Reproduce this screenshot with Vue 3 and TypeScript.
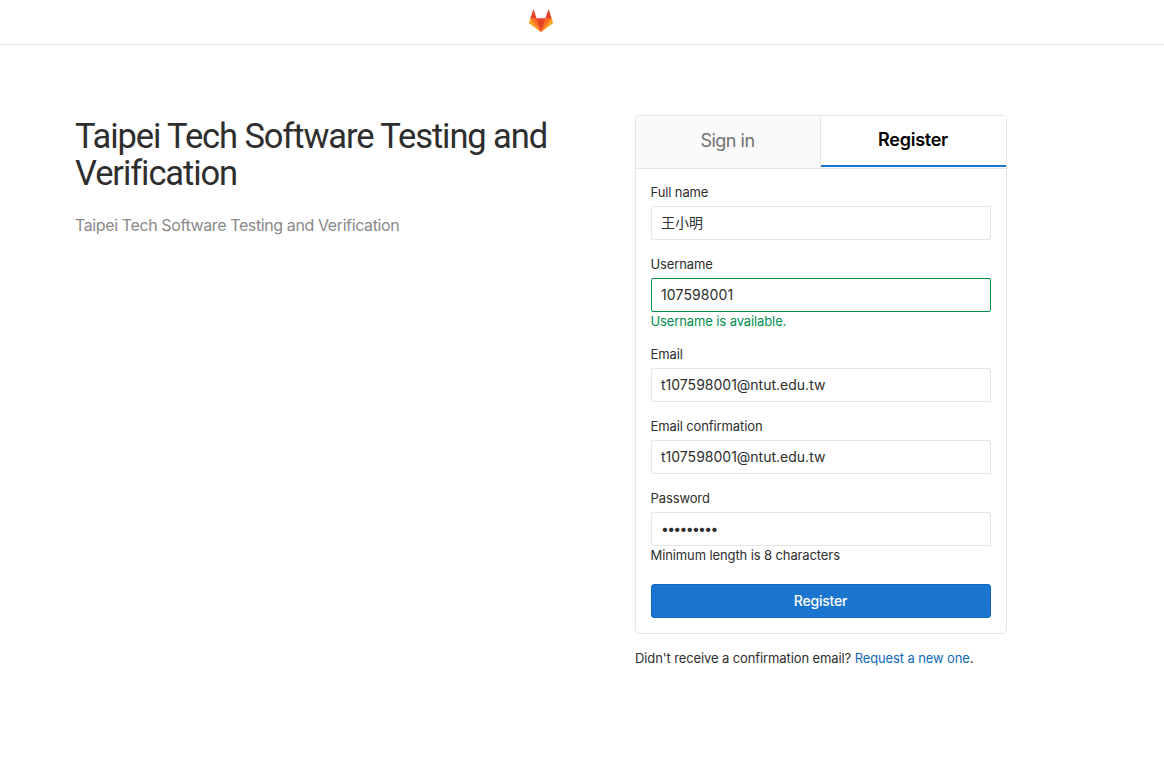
<script setup lang="ts">
import { ref } from 'vue'

interface Field {
  id: string
  label: string
  type: string
  value: string
  hint?: string
  valid?: boolean
}

const fields = ref<Field[]>([
  { id: 'name', label: 'Full name', type: 'text', value: '王小明' },
  { id: 'username', label: 'Username', type: 'text', value: '107598001', hint: 'Username is available.', valid: true },
  { id: 'email', label: 'Email', type: 'text', value: 't107598001@ntut.edu.tw' },
  { id: 'email-confirmation', label: 'Email confirmation', type: 'text', value: 't107598001@ntut.edu.tw' },
  { id: 'password', label: 'Password', type: 'password', value: '107598001', hint: 'Minimum length is 8 characters' },
])
</script>

<template>
  <div class="page">
    <header class="navbar">
      <svg class="logo" width="24" height="24" viewBox="0 0 36 36" aria-label="GitLab">
        <path fill="#e24329" d="M2 14l9.38 9v-9l-4-12.28c-.205-.632-1.176-.632-1.38 0z" />
        <path fill="#e24329" d="M34 14l-9.38 9v-9l4-12.28c.205-.632 1.176-.632 1.38 0z" />
        <path fill="#e24329" d="M18 34.38L3 14h30z" />
        <path fill="#fc6d26" d="M18 34.38L11.38 14H2l4 11z" />
        <path fill="#fc6d26" d="M18 34.38L24.62 14H34l-4 11z" />
        <path fill="#fca326" d="M2 14L.1 20.16c-.18.565 0 1.2.5 1.56L18 34.38z" />
        <path fill="#fca326" d="M34 14l1.9 6.16c.18.565 0 1.2-.5 1.56L18 34.38z" />
      </svg>
    </header>
    <main class="content">
      <section class="brand">
        <h1>Taipei Tech Software Testing and Verification</h1>
        <p>Taipei Tech Software Testing and Verification</p>
      </section>
      <section class="account">
        <div class="panel">
          <nav class="tabs">
            <a class="tab"><span>Sign in</span></a>
            <a class="tab active"><span>Register</span></a>
          </nav>
          <form class="form" @submit.prevent>
            <div v-for="f in fields" :key="f.id" class="group">
              <label :for="f.id"><span>{{ f.label }}</span></label>
              <input :id="f.id" v-model="f.value" :type="f.type" :class="{ valid: f.valid }" autocomplete="off" />
              <p v-if="f.hint" class="hint" :class="{ valid: f.valid }">{{ f.hint }}</p>
            </div>
            <button type="submit">Register</button>
          </form>
        </div>
        <p class="resend"><span>Didn't receive a confirmation email?</span> <a>Request a new one</a>.</p>
      </section>
    </main>
  </div>
</template>

<style>
body {
  margin: 0;
  background: #fff;
}
</style>

<style scoped>
.page {
  min-height: 759px;
  box-sizing: border-box;
  font-family: Inter, "Noto Sans CJK TC", sans-serif;
  font-size: 13px;
  line-height: 18px;
  letter-spacing: -0.11px;
  color: #2e2e2e;
}
.navbar {
  height: 45px;
  box-sizing: border-box;
  border-bottom: 1px solid #eaeaea;
  padding: 9px 0 0 529px;
}
.logo {
  display: block;
}
.content {
  display: grid;
  grid-template-columns: 500px 372px;
  column-gap: 60px;
  padding: 70px 0 0 75px;
}
h1 {
  margin: 3px 0 0;
  font-family: Roboto, Inter, sans-serif;
  font-size: 34.5px;
  line-height: 37px;
  font-weight: 400;
  letter-spacing: -1.1px;
}
.brand p {
  margin: 21px 0 0;
  font-size: 16px;
  line-height: 24px;
  color: #898989;
  letter-spacing: -0.39px;
}
.panel {
  border: 1px solid #e5e5e5;
  border-radius: 4px;
  overflow: hidden;
  height: 519px;
  box-sizing: border-box;
}
.tabs {
  display: grid;
  grid-template-columns: 185px 185px;
  height: 53px;
  box-sizing: border-box;
  border-bottom: 1px solid #e5e5e5;
}
.tab {
  box-sizing: border-box;
  height: 52px;
  padding-right: 1px;
  line-height: 50px;
  text-align: center;
  font-size: 18px;
  letter-spacing: -0.5px;
  color: #707070;
  background: #fafafa;
  border-right: 1px solid #e5e5e5;
}
.tab.active {
  height: 51px;
  line-height: 48px;
  color: #000;
  background: #fff;
  font-weight: 600;
  letter-spacing: -0.25px;
  border-right: 0;
  border-bottom: 2px solid #1a75cf;
}
.form {
  padding: 14px 15px 15px;
}
.group {
  margin-bottom: 15px;
}
label {
  display: block;
  height: 23px;
  line-height: 18px;
  text-indent: -0.5px;
}
input {
  display: block;
  width: 340px;
  height: 34px;
  box-sizing: border-box;
  padding: 5px 9px 7px;
  border: 1px solid #e5e5e5;
  border-radius: 2px;
  font: inherit;
  font-size: 14px;
  letter-spacing: 0;
  color: #2e2e2e;
  outline: none;
}
input.valid {
  border-color: #00904c;
  letter-spacing: 0.12px;
}
input[type='password'] {
  letter-spacing: -1.7px;
}
.hint {
  margin: 0;
  text-indent: -0.5px;
}
.hint.valid {
  color: #00904c;
}
button {
  display: block;
  width: 340px;
  height: 34px;
  margin-top: 20px;
  padding: 0 1px 0 0;
  border: 1px solid #1068b8;
  border-radius: 3px;
  background: #1a75cf;
  color: #fff;
  font: inherit;
  font-size: 14px;
  font-weight: 500;
  letter-spacing: -0.2px;
}
.resend {
  margin: 15px 0 0;
}
.resend a {
  color: #1068b8;
}
</style>
